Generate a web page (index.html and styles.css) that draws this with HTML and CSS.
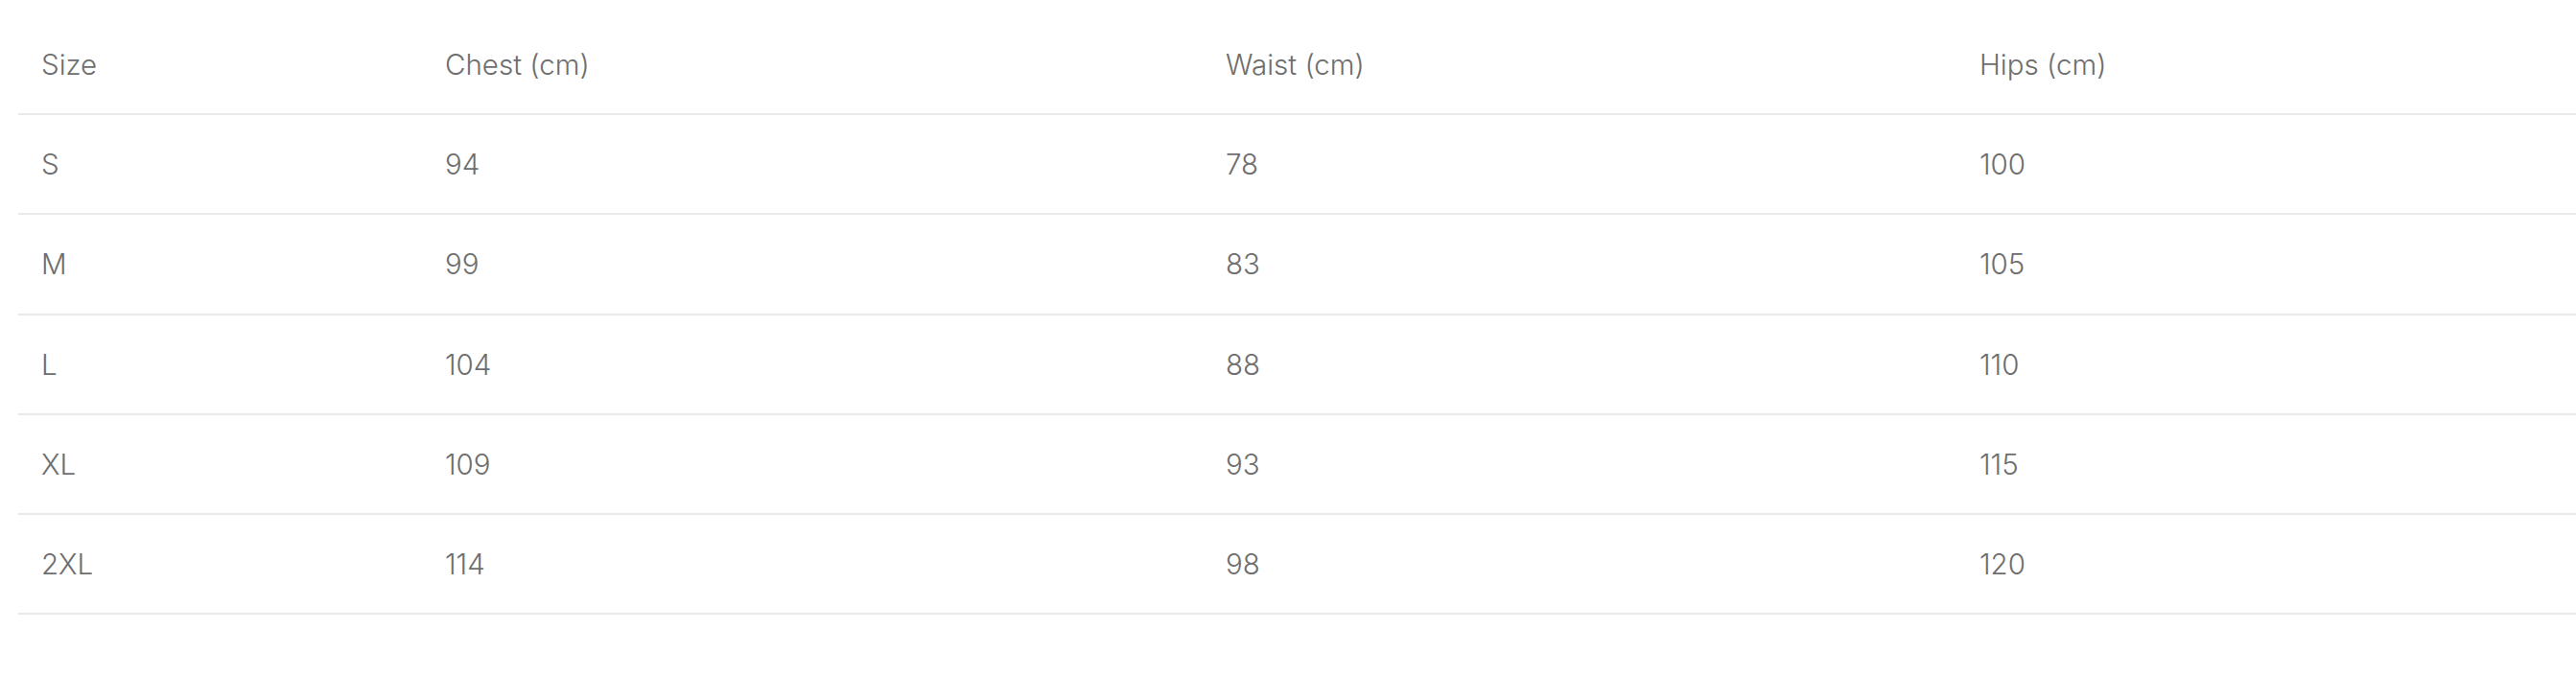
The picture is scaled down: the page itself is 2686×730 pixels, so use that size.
FILE: index.html
```html
<!DOCTYPE html>
<html lang="en">
<head>
<meta charset="utf-8">
<title>Size chart</title>
<link rel="stylesheet" href="styles.css">
</head>
<body>
<div class="size-chart">
  <table class="size-table">
    <colgroup>
      <col class="col-size">
      <col class="col-chest">
      <col class="col-waist">
      <col class="col-hips">
    </colgroup>
    <thead>
      <tr><th>Size</th><th>Chest (cm)</th><th>Waist (cm)</th><th>Hips (cm)</th></tr>
    </thead>
    <tbody>
      <tr><td>S</td><td>94</td><td>78</td><td>100</td></tr>
      <tr><td>M</td><td>99</td><td>83</td><td>105</td></tr>
      <tr><td>L</td><td>104</td><td>88</td><td>110</td></tr>
      <tr><td>XL</td><td>109</td><td>93</td><td>115</td></tr>
      <tr><td>2XL</td><td>114</td><td>98</td><td>120</td></tr>
    </tbody>
  </table>
</div>
</body>
</html>
```

FILE: styles.css
```css
html, body {
  margin: 0;
  padding: 0;
  background: #ffffff;
}

.size-chart {
  padding: 16px 0 0 19px;
}

.size-table {
  width: 100%;
  border-collapse: collapse;
  table-layout: fixed;
  font-family: Inter, "Liberation Sans", sans-serif;
  font-size: 29.5px;
  font-weight: 300;
  color: #6e6e6e;
}

.col-size { width: 421px; }
.col-chest { width: 814px; }
.col-waist { width: 786px; }

.size-table th,
.size-table td {
  text-align: left;
  font-weight: 300;
  padding: 30px 24px;
  line-height: 42.2px;
  border-bottom: 2px solid #e9e9e9;
  white-space: nowrap;
}
```
